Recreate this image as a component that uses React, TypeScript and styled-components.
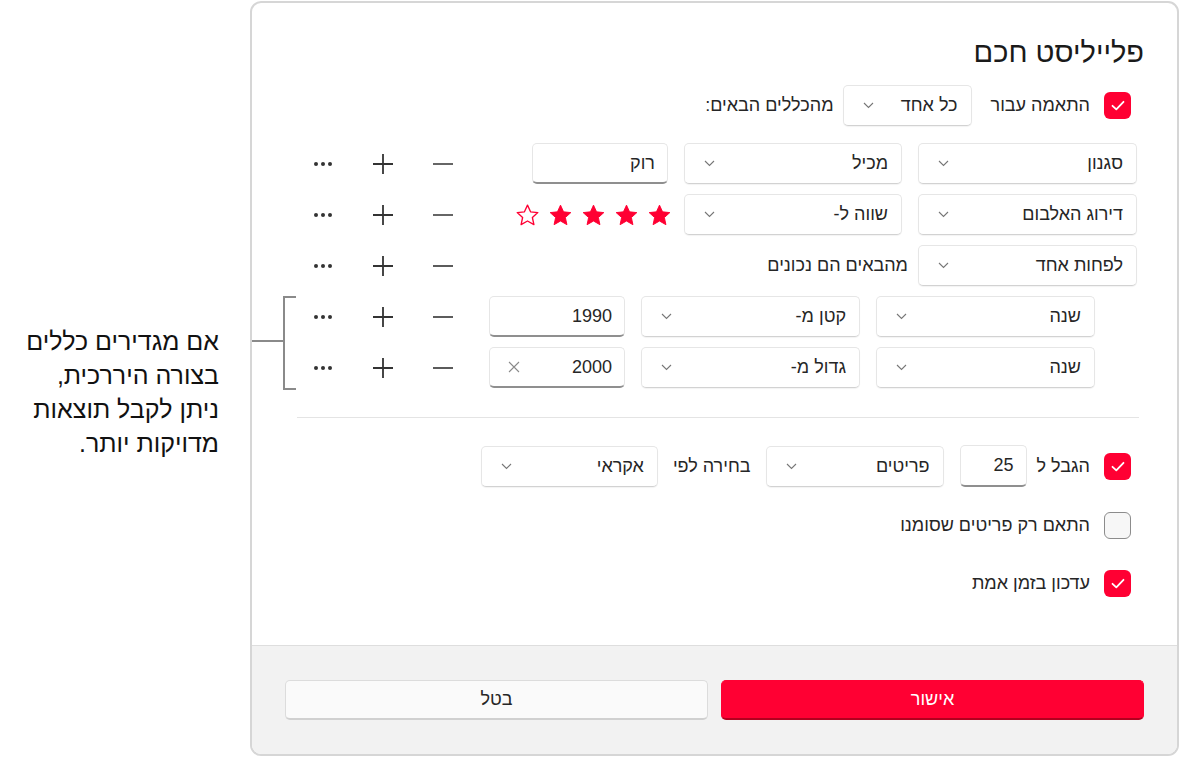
import React from 'react';
import styled, { createGlobalStyle } from 'styled-components';

const RED = '#ff0033';
const TEXT = '#262626';

const GlobalStyle = createGlobalStyle`
  html, body {
    margin: 0;
    padding: 0;
    background: #fff;
  }
  body {
    font-family: "Liberation Sans", "DejaVu Sans", sans-serif;
    color: ${TEXT};
  }
`;

const Page = styled.div`
  display: flex;
  width: 1181px;
  height: 758px;
  overflow: hidden;
`;

const Note = styled.div`
  width: 250px;
  box-sizing: border-box;
  padding: 324px 31px 0 0;
  direction: rtl;
  text-align: right;
  font-size: 25px;
  line-height: 34px;
  color: #111;
`;

const Dialog = styled.div`
  width: 929px;
  height: 755px;
  margin-top: 1px;
  box-sizing: border-box;
  border: 2px solid #d6d6d6;
  border-radius: 11px;
  display: flex;
  flex-direction: column;
  overflow: hidden;
  direction: rtl;
  background: #fff;
`;

const Body = styled.div`
  flex: 1;
  padding: 27px 33px 0 45px;
  display: flex;
  flex-direction: column;
`;

const Title = styled.h1`
  margin: 0;
  height: 44px;
  font-size: 29px;
  line-height: 44px;
  font-weight: 400;
  color: #1a1a1a;
`;

const Row = styled.div<{ $top?: number; $height?: number }>`
  display: flex;
  align-items: center;
  height: ${(p) => p.$height ?? 41}px;
  margin-top: ${(p) => p.$top ?? 0}px;
`;

const Label = styled.span<{ $gap?: number; $end?: number }>`
  font-size: 18px;
  white-space: nowrap;
  margin-right: ${(p) => p.$gap ?? 10}px;
  margin-left: ${(p) => p.$end ?? p.$gap ?? 10}px;
`;

const Box = styled.div<{ $on?: boolean }>`
  width: 27px;
  height: 27px;
  box-sizing: border-box;
  border-radius: 6px;
  margin-right: 13px;
  margin-left: 2px;
  display: flex;
  align-items: center;
  justify-content: center;
  background: ${(p) => (p.$on ? RED : '#f7f7f7')};
  border: ${(p) => (p.$on ? 'none' : '1.5px solid #8c8c8c')};
  flex-shrink: 0;
`;

const SelectBox = styled.div<{ $w: number }>`
  width: ${(p) => p.$w}px;
  height: 41px;
  box-sizing: border-box;
  display: flex;
  align-items: center;
  justify-content: space-between;
  padding: 0 13px 0 19px;
  background: #fff;
  border: 1px solid #e6e6e6;
  border-bottom-color: #d2d2d2;
  border-radius: 5px;
  box-shadow: 0 1px 1px rgba(0, 0, 0, 0.05);
  font-size: 18px;
  flex-shrink: 0;
`;

const InputBox = styled.div<{ $w: number; $h?: number }>`
  width: ${(p) => p.$w}px;
  height: ${(p) => p.$h ?? 41}px;
  box-sizing: border-box;
  display: flex;
  align-items: center;
  justify-content: space-between;
  padding: 0 12px 0 18px;
  background: #fff;
  border: 1px solid #e6e6e6;
  border-bottom: 2px solid #8f8f8f;
  border-radius: 5px;
  font-size: 18px;
  flex-shrink: 0;
`;

const Rules = styled.div`
  display: flex;
  flex-direction: column;
  gap: 10px;
  margin-top: 17px;
`;

const RuleRow = styled.div<{ $indent?: number }>`
  display: flex;
  align-items: center;
  justify-content: space-between;
  height: 41px;
  padding-right: ${(p) => p.$indent ?? 7}px;
`;

const Fields = styled.div`
  display: flex;
  align-items: center;
  gap: 16px;
`;

const Actions = styled.div`
  display: flex;
  align-items: center;
  margin-left: -4px;
`;

const ActionBtn = styled.div`
  width: 60px;
  height: 41px;
  display: flex;
  align-items: center;
  justify-content: center;
`;

const Nested = styled.div`
  position: relative;
  display: flex;
  flex-direction: column;
  gap: 10px;

  &::before {
    content: '';
    position: absolute;
    left: -14px;
    top: 0;
    width: 11px;
    height: 90px;
    border: 2px solid #8a8a8a;
    border-right: none;
  }

  &::after {
    content: '';
    position: absolute;
    left: -71px;
    top: 44px;
    width: 57px;
    height: 2px;
    background: #8a8a8a;
  }
`;

const Stars = styled.div`
  display: flex;
  align-items: center;
  gap: 10px;
  margin-right: -3px;
`;

const Separator = styled.div`
  height: 1px;
  background: #e4e4e4;
  margin: 29px 5px 0 0;
`;

const Footer = styled.div`
  height: 108px;
  flex-shrink: 0;
  border-top: 1px solid #dedede;
  background: #f2f2f2;
  display: flex;
  align-items: center;
  gap: 13px;
  padding: 0 33px;
`;

const Button = styled.div<{ $primary?: boolean }>`
  flex: 1;
  height: 40px;
  box-sizing: border-box;
  border-radius: 5px;
  display: flex;
  align-items: center;
  justify-content: center;
  font-size: 18px;
  background: ${(p) => (p.$primary ? RED : '#fafafa')};
  color: ${(p) => (p.$primary ? '#fff' : TEXT)};
  border: 1px solid ${(p) => (p.$primary ? RED : '#dcdcdc')};
  border-bottom: 2px solid ${(p) => (p.$primary ? '#b3001f' : '#d0d0d0')};
`;

const Chevron = () => (
  <svg width="11" height="7" viewBox="0 0 11 7">
    <path d="M1 1l4.5 4.5L10 1" fill="none" stroke="#777" strokeWidth="1.1" />
  </svg>
);

const Check = () => (
  <svg width="14" height="11" viewBox="0 0 14 11">
    <path d="M1.5 5.8l3.8 3.6L12.5 1.8" fill="none" stroke="#fff" strokeWidth="1.8" strokeLinecap="round" strokeLinejoin="round" />
  </svg>
);

const Dots = () => (
  <svg width="20" height="6" viewBox="0 0 20 6">
    <circle cx="3" cy="3" r="2" fill="#333" />
    <circle cx="10" cy="3" r="2" fill="#333" />
    <circle cx="17" cy="3" r="2" fill="#333" />
  </svg>
);

const Plus = () => (
  <svg width="20" height="20" viewBox="0 0 20 20">
    <path d="M10 0v20M0 10h20" stroke="#333" strokeWidth="1.8" />
  </svg>
);

const Minus = () => (
  <svg width="20" height="20" viewBox="0 0 20 20">
    <path d="M0 10h20" stroke="#333" strokeWidth="1.6" />
  </svg>
);

const Clear = () => (
  <svg width="12" height="12" viewBox="0 0 12 12">
    <path d="M1 1l10 10M11 1L1 11" stroke="#8a8a8a" strokeWidth="1.1" />
  </svg>
);

const Star = ({ filled }: { filled: boolean }) => (
  <svg width="23" height="22" viewBox="0 0 24 23">
    <path
      d="M12 1.2l3.2 7 7.6.8-5.7 5.1 1.6 7.5L12 17.8l-6.7 3.8 1.6-7.5L1.2 9l7.6-.8z"
      fill={filled ? RED : 'none'}
      stroke={RED}
      strokeWidth={filled ? 1 : 1.4}
      strokeLinejoin="round"
    />
  </svg>
);

function Select({ w, value }: { w: number; value: string }) {
  return (
    <SelectBox $w={w}>
      <span>{value}</span>
      <Chevron />
    </SelectBox>
  );
}

function RowActions() {
  return (
    <Actions>
      <ActionBtn><Minus /></ActionBtn>
      <ActionBtn><Plus /></ActionBtn>
      <ActionBtn><Dots /></ActionBtn>
    </Actions>
  );
}

export default function App() {
  return (
    <Page>
      <GlobalStyle />
      <Note>
        אם מגדירים כללים
        <br />
        בצורה היררכית,
        <br />
        ניתן לקבל תוצאות
        <br />
        מדויקות יותר.
      </Note>
      <Dialog>
        <Body>
          <Title>פלייליסט חכם</Title>

          <Row $top={11}>
            <Box $on><Check /></Box>
            <Label $gap={12} $end={19}>התאמה עבור</Label>
            <Select w={129} value="כל אחד" />
            <Label $gap={9}>מהכללים הבאים:</Label>
          </Row>

          <Rules>
            <RuleRow>
              <Fields>
                <Select w={219} value="סגנון" />
                <Select w={218} value="מכיל" />
                <InputBox $w={136}>רוק</InputBox>
              </Fields>
              <RowActions />
            </RuleRow>

            <RuleRow>
              <Fields>
                <Select w={219} value="דירוג האלבום" />
                <Select w={218} value="שווה ל-" />
                <Stars>
                  <Star filled />
                  <Star filled />
                  <Star filled />
                  <Star filled />
                  <Star filled={false} />
                </Stars>
              </Fields>
              <RowActions />
            </RuleRow>

            <RuleRow>
              <Fields>
                <Select w={219} value="לפחות אחד" />
                <Label $gap={-6}>מהבאים הם נכונים</Label>
              </Fields>
              <RowActions />
            </RuleRow>

            <Nested>
              <RuleRow $indent={49}>
                <Fields>
                  <Select w={219} value="שנה" />
                  <Select w={219} value="קטן מ-" />
                  <InputBox $w={136}>1990</InputBox>
                </Fields>
                <RowActions />
              </RuleRow>
              <RuleRow $indent={49}>
                <Fields>
                  <Select w={219} value="שנה" />
                  <Select w={219} value="גדול מ-" />
                  <InputBox $w={136}>
                    <span>2000</span>
                    <Clear />
                  </InputBox>
                </Fields>
                <RowActions />
              </RuleRow>
            </Nested>
          </Rules>

          <Separator />

          <Row $top={27} $height={42}>
            <Box $on><Check /></Box>
            <Label $gap={12} $end={10}>הגבל ל</Label>
            <InputBox $w={67} $h={42}>25</InputBox>
            <Label $gap={8} />
            <Select w={178} value="פריטים" />
            <Label $gap={15}>בחירה לפי</Label>
            <Select w={177} value="אקראי" />
          </Row>

          <Row $top={18} $height={40}>
            <Box><span /></Box>
            <Label $gap={12}>התאם רק פריטים שסומנו</Label>
          </Row>

          <Row $top={18} $height={40}>
            <Box $on><Check /></Box>
            <Label $gap={12}>עדכון בזמן אמת</Label>
          </Row>
        </Body>

        <Footer>
          <Button $primary>אישור</Button>
          <Button>בטל</Button>
        </Footer>
      </Dialog>
    </Page>
  );
}
